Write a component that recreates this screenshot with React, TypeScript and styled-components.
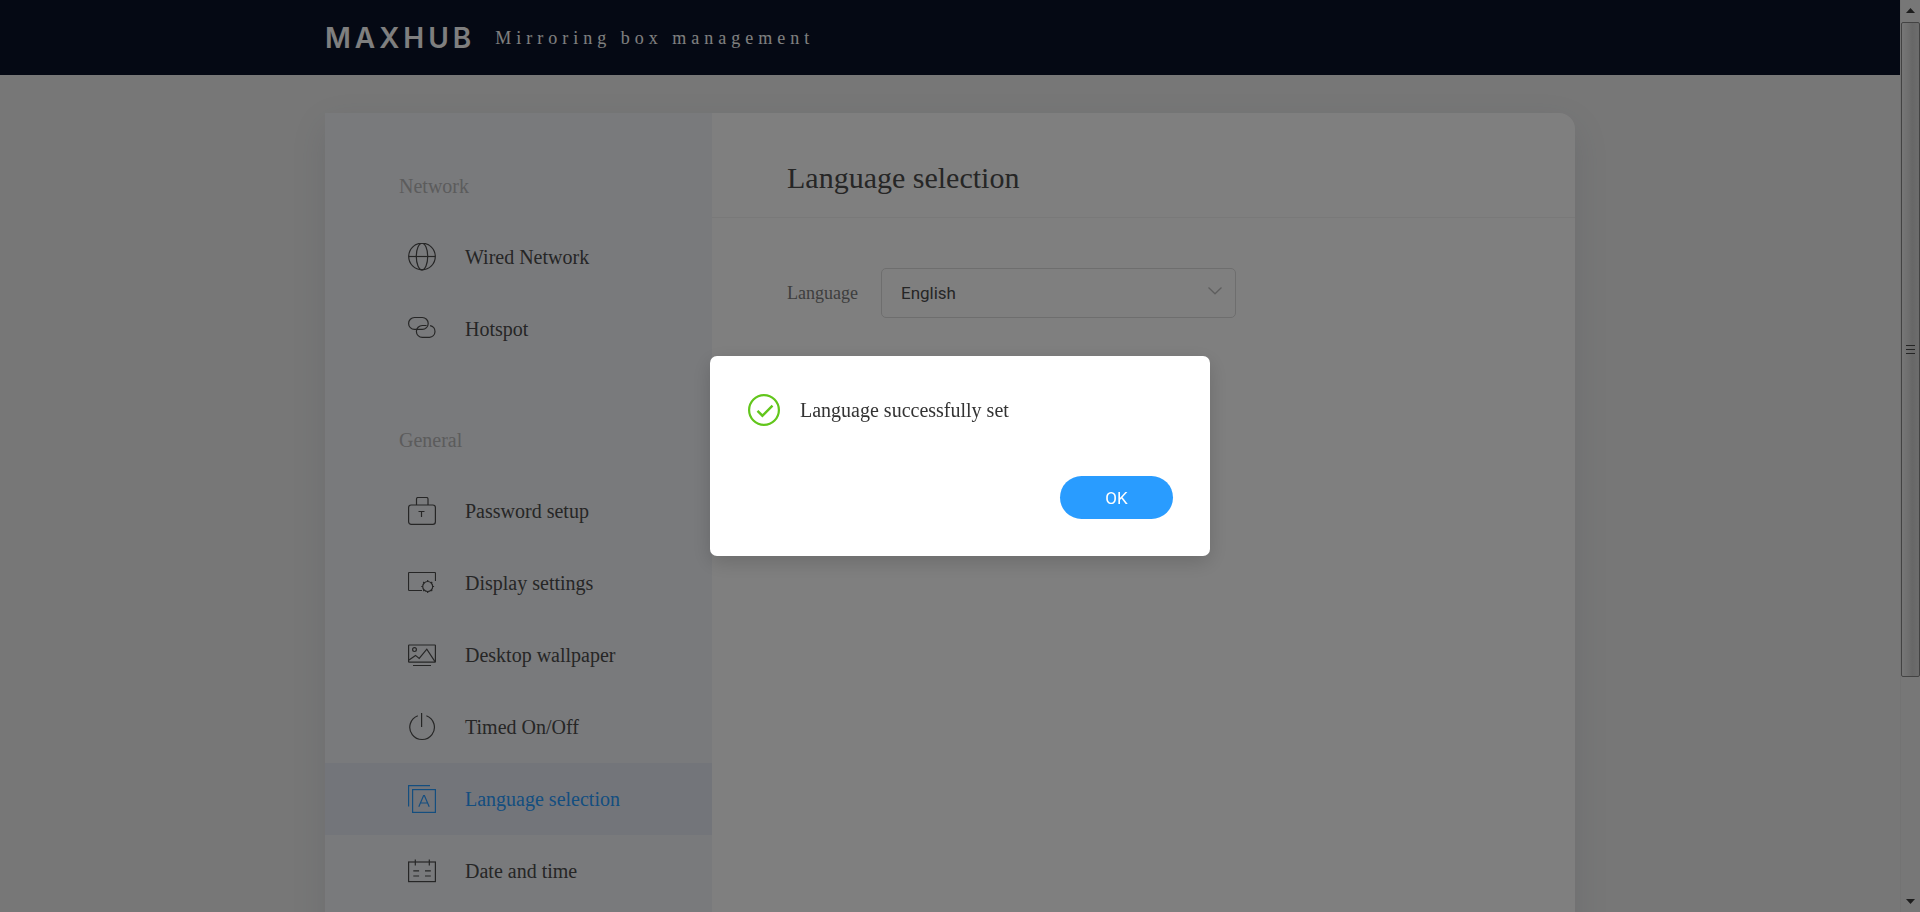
import React from 'react';
import styled, { createGlobalStyle } from 'styled-components';

const serif = `'Liberation Serif', 'Times New Roman', serif`;
const sans = `Roboto, 'Liberation Sans', sans-serif`;

const GlobalStyle = createGlobalStyle`
  *, *::before, *::after { box-sizing: border-box; }
  body {
    margin: 0;
    background: #eeeeee;
    color: #4c4c4c;
    font-family: ${serif};
    font-size: 20px;
    line-height: 24px;
  }
`;

const Shell = styled.div`
  display: flex;
  height: 100vh;
  overflow: hidden;
`;

const Page = styled.div`
  flex: 1;
  min-width: 0;
  height: 100%;
  overflow: hidden;
`;

const Header = styled.header`
  display: flex;
  justify-content: center;
  height: 75px;
  padding: 0 24px;
  background: #0a1228;
`;

const HeaderInner = styled.div`
  display: flex;
  align-items: center;
  gap: 20px;
  width: 100%;
  max-width: 1250px;
  color: #ffffff;
`;

const Logo = styled.span`
  flex: 0 0 149px;
  font-family: Inter, sans-serif;
  font-size: 28px;
  font-weight: 600;
  letter-spacing: 4px;
`;

const ProductName = styled.span`
  font-size: 18px;
  letter-spacing: 5px;
  white-space: nowrap;
`;

const Main = styled.main`
  display: flex;
  justify-content: center;
  padding: 38px 24px;
`;

const Card = styled.div`
  display: flex;
  width: 100%;
  max-width: 1250px;
  border-radius: 0 16px 16px 0;
  background: #ffffff;
  box-shadow: 0 12px 36px rgba(60, 80, 120, 0.11);
`;

const Sidebar = styled.nav`
  flex: 0 0 387px;
  display: flex;
  flex-direction: column;
  gap: 63px;
  padding: 61px 0 64px;
  background: #f3f5f9;
`;

const GroupTitle = styled.h2`
  margin: 0 0 23px;
  padding-left: 74px;
  color: #b8b8b8;
  font-size: 20px;
  font-weight: 400;
`;

const MenuList = styled.ul`
  margin: 0;
  padding: 0;
  list-style: none;
`;

const MenuLink = styled.a<{ $active?: boolean }>`
  display: flex;
  align-items: center;
  gap: 29px;
  height: 72px;
  padding-left: 83px;
  background: ${(p) => (p.$active ? '#e7eaf5' : 'transparent')};
  color: ${(p) => (p.$active ? '#299cff' : '#4c4c4c')};
  text-decoration: none;
`;

const MenuIcon = styled.svg`
  width: 28px;
  height: 28px;
  fill: none;
  stroke: currentColor;
  stroke-width: 1.2;
`;

const Content = styled.section`
  flex: 1;
  min-width: 0;
`;

const ContentHeader = styled.div`
  padding: 47px 75px 21px;
  border-bottom: 1px solid #f3f3f3;
`;

const Title = styled.h1`
  margin: 0;
  font-size: 30px;
  font-weight: 400;
  line-height: 36px;
`;

const Field = styled.div`
  display: flex;
  align-items: center;
  gap: 23px;
  padding: 50px 75px;
`;

const FieldLabel = styled.label`
  color: #7c7c7c;
  font-size: 18px;
`;

const SelectBox = styled.div`
  position: relative;
  flex: 0 1 355px;
`;

const Select = styled.select`
  display: block;
  width: 100%;
  height: 50px;
  padding: 0 48px 0 19px;
  border: 1px solid #dcdcdc;
  border-radius: 5px;
  appearance: none;
  background: transparent;
  color: #4c4c4c;
  font-family: ${sans};
  font-size: 17px;
`;

const Chevron = styled.svg`
  position: absolute;
  top: 18px;
  right: 13px;
  width: 16px;
  height: 10px;
  fill: none;
  stroke: #bcbcbc;
  stroke-width: 1.3;
  pointer-events: none;
`;

const ScrollBar = styled.div`
  flex: 0 0 20px;
  display: flex;
  flex-direction: column;
  align-items: center;
  border-left: 1px solid #e6e6e6;
  background: #efefef;
`;

const ScrollArrow = styled.svg`
  flex: none;
  width: 18px;
  height: 22px;
  fill: #3a3a3a;
`;

const ScrollTrack = styled.div`
  flex: 1;
  width: 100%;
`;

const ScrollThumb = styled.div`
  display: flex;
  flex-direction: column;
  align-items: center;
  justify-content: center;
  gap: 3px;
  height: 75.5%;
  border: 1px solid #878787;
  border-radius: 2px;
  background: linear-gradient(to right, #eeeeee, #dcdcdc 40%, #cfcfcf 60%, #dadada);
`;

const GripLine = styled.span`
  width: 9px;
  height: 1px;
  background: #4a4a4a;
`;

const Overlay = styled.div`
  position: fixed;
  inset: 0;
  display: flex;
  align-items: center;
  justify-content: center;
  background: rgba(0, 0, 0, 0.5);
`;

const Dialog = styled.div`
  display: flex;
  flex-direction: column;
  gap: 50px;
  width: 500px;
  max-width: 100%;
  padding: 38px 37px 37px;
  border-radius: 7px;
  background: #ffffff;
  box-shadow: 0 6px 20px rgba(0, 0, 0, 0.16);
`;

const Message = styled.div`
  display: flex;
  align-items: center;
  gap: 20px;
  padding-left: 1px;
  color: #333333;
`;

const SuccessIcon = styled.svg`
  width: 32px;
  height: 32px;
  fill: none;
  stroke: #62c61c;
`;

const OkButton = styled.button`
  align-self: flex-end;
  width: 113px;
  height: 43px;
  border: 0;
  border-radius: 22px;
  background: #299cff;
  color: #ffffff;
  font-family: ${sans};
  font-size: 17px;
  cursor: pointer;
`;

type Item = { label: string; icon: React.ReactNode; active?: boolean };
type Group = { title: string; items: Item[] };

const groups: Group[] = [
  {
    title: 'Network',
    items: [
      {
        label: 'Wired Network',
        icon: (
          <>
            <circle cx="14" cy="13.5" r="13.3" />
            <ellipse cx="14" cy="13.5" rx="5.7" ry="13.3" />
            <path d="M.7 13.5h26.6" />
          </>
        ),
      },
      {
        label: 'Hotspot',
        icon: (
          <>
            <rect x=".6" y="2.5" width="19.6" height="11.8" rx="5.900" />
            <path d="M18.600 10.5h-4.300a5.900 5.900 0 0 0 0 11.800h7.200a5.900 5.900 0 0 0 .6-11.700" />
          </>
        ),
      },
    ],
  },
  {
    title: 'General',
    items: [
      {
        label: 'Password setup',
        icon: (
          <>
            <rect x=".6" y="8" width="26.8" height="19.3" rx="2.6" />
            <path d="M8.5 8V2a1.5 1.5 0 0 1 1.5-1.5h8.5A1.5 1.5 0 0 1 20 2v6M10.5 14.5h6M13.5 14.5V20" />
          </>
        ),
      },
      {
        label: 'Display settings',
        icon: (
          <>
            <path d="M27.5 12V4.3a.8.8 0 0 0-.8-.8H1.3a.8.8 0 0 0-.8.8v16.4a.8.8 0 0 0 .8.8H14" />
            <circle cx="19.7" cy="17.5" r="5" />
            <path d="M19.7 12.5V11M19.7 24v-1.5M14.7 17.5h-1.4M26.1 17.5h-1.4M16.2 14l-1-1M24.2 13l-1 1M16.2 21l-1 1M24.2 22l-1-1" />
          </>
        ),
      },
      {
        label: 'Desktop wallpaper',
        icon: (
          <>
            <rect x=".6" y="4" width="26.8" height="17.2" rx=".5" />
            <circle cx="6.5" cy="8.6" r="1.9" />
            <path d="M1 19l6.5-4.6 3.7 3.1 7.6-9.3L27 20.6M5 24.5h18" />
          </>
        ),
      },
      {
        label: 'Timed On/Off',
        icon: <path d="M9.8 2.7a12.3 12.3 0 1 0 8.6 0M13.6 0v14" />,
      },
      {
        label: 'Language selection',
        active: true,
        icon: (
          <>
            <path d="M.6 21.5V.6H22" />
            <rect x="4.6" y="4.6" width="22.8" height="22.8" />
            <path d="M10.8 21.8l4.8-11.3h.8l4.8 11.3M12.4 18h7.2" />
          </>
        ),
      },
      {
        label: 'Date and time',
        icon: (
          <>
            <rect x=".6" y="5" width="26.8" height="19.6" />
            <path d="M7.3 2.5v6M21.3 2.5v6M5.3 13.8h5.8M17 13.8h5.8M5.3 19h5.8M17 19h5.8" />
          </>
        ),
      },
    ],
  },
];

export default function App() {
  return (
    <>
      <GlobalStyle />
      <Shell>
        <Page>
          <Header>
            <HeaderInner>
              <Logo>MAXHUB</Logo>
              <ProductName>Mirroring box management</ProductName>
            </HeaderInner>
          </Header>
          <Main>
            <Card>
              <Sidebar>
                {groups.map((group) => (
                  <div key={group.title}>
                    <GroupTitle>{group.title}</GroupTitle>
                    <MenuList>
                      {group.items.map((item) => (
                        <li key={item.label}>
                          <MenuLink
                            href="#"
                            $active={item.active}
                            aria-current={item.active ? 'page' : undefined}
                          >
                            <MenuIcon viewBox="0 0 28 28" aria-hidden="true">
                              {item.icon}
                            </MenuIcon>
                            {item.label}
                          </MenuLink>
                        </li>
                      ))}
                    </MenuList>
                  </div>
                ))}
              </Sidebar>
              <Content>
                <ContentHeader>
                  <Title>Language selection</Title>
                </ContentHeader>
                <Field>
                  <FieldLabel htmlFor="language">Language</FieldLabel>
                  <SelectBox>
                    <Select id="language" defaultValue="en">
                      <option value="en">English</option>
                    </Select>
                    <Chevron viewBox="0 0 16 10" aria-hidden="true">
                      <path d="M1.5 1.5L8 7.8l6.5-6.3" />
                    </Chevron>
                  </SelectBox>
                </Field>
              </Content>
            </Card>
          </Main>
        </Page>
        <ScrollBar aria-hidden="true">
          <ScrollArrow viewBox="0 0 18 22">
            <path d="M4 13L8.5 8l4.500 5z" />
          </ScrollArrow>
          <ScrollTrack>
            <ScrollThumb>
              <GripLine />
              <GripLine />
              <GripLine />
            </ScrollThumb>
          </ScrollTrack>
          <ScrollArrow viewBox="0 0 18 22">
            <path d="M4 9l4.500 5L13 9z" />
          </ScrollArrow>
        </ScrollBar>
      </Shell>
      <Overlay>
        <Dialog role="alertdialog" aria-modal="true" aria-labelledby="dialog-message">
          <Message>
            <SuccessIcon viewBox="0 0 32 32" aria-hidden="true">
              <circle cx="16" cy="16" r="14.900" strokeWidth="2.200" />
              <path d="M9.500 16.800l4.900 4.900L24.500 11.600" strokeWidth="2.400" />
            </SuccessIcon>
            <span id="dialog-message">Language successfully set</span>
          </Message>
          <OkButton type="button">OK</OkButton>
        </Dialog>
      </Overlay>
    </>
  );
}
